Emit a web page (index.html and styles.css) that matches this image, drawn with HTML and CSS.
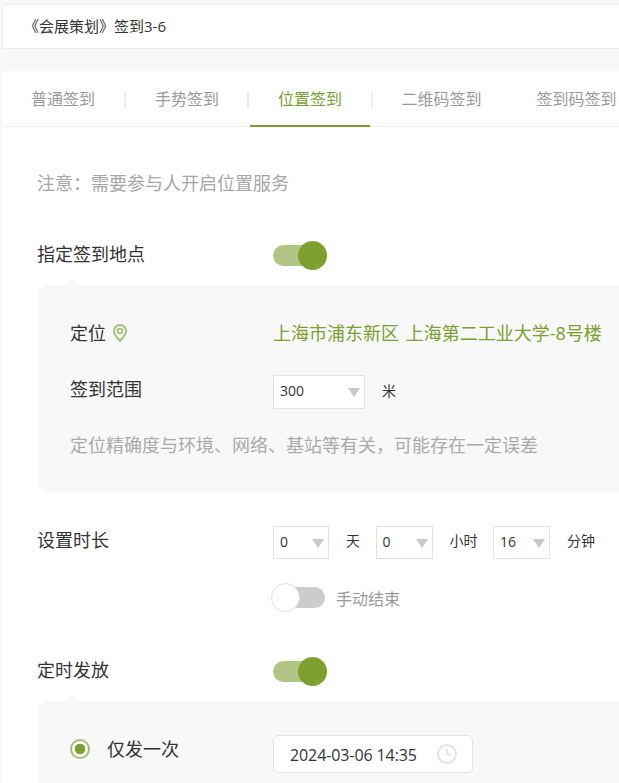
FILE: index.html
```html
<!DOCTYPE html>
<html lang="zh-CN">

<head>
    <meta charset="UTF-8">
    <title>位置签到</title>
    <link rel="stylesheet" href="styles.css">
</head>

<body>
    <div class="page">
        <div class="title_bar">《会展策划》签到3-6</div>

        <div class="main_card">
            <div class="tabs">
                <div class="tab tab_first">普通签到</div>
                <div class="tab">手势签到</div>
                <div class="tab active">位置签到</div>
                <div class="tab no_line">二维码签到</div>
                <div class="tab no_line last">签到码签到</div>
            </div>

            <div class="content">
                <p class="notice">注意&#xFF1A;需要参与人开启位置服务</p>

                <div class="row switch_row">
                    <div class="label">指定签到地点</div>
                    <div class="switch on"><span class="thumb"></span></div>
                </div>

                <div class="panel">
                    <div class="panel_row location_row">
                        <div class="panel_label">定位
                            <svg class="pin" viewBox="0 0 14 18" width="14" height="18">
                                <path d="M7 1C3.700 1 1 3.600 1 6.900c0 4 4 7.600 6 10 2-2.400 6-6 6-10C13 3.600 10.300 1 7 1z" fill="none" stroke="#a3bf70" stroke-width="2"/>
                                <circle cx="7" cy="7" r="2.500" fill="none" stroke="#a3bf70" stroke-width="1.600"/>
                            </svg>
                        </div>
                        <div class="address">上海市浦东新区 上海第二工业大学-8号楼</div>
                    </div>
                    <div class="panel_row range_row">
                        <div class="panel_label">签到范围</div>
                        <div class="select range_select">300<span class="arrow"></span></div>
                        <span class="unit">米</span>
                    </div>
                    <p class="hint">定位精确度与环境、网络、基站等有关&#xFF0C;可能存在一定误差</p>
                </div>

                <div class="row duration_row">
                    <div class="label">设置时长</div>
                    <div class="select small_select first_select">0<span class="arrow"></span></div>
                    <span class="unit">天</span>
                    <div class="select small_select">0<span class="arrow"></span></div>
                    <span class="unit">小时</span>
                    <div class="select small_select">16<span class="arrow"></span></div>
                    <span class="unit">分钟</span>
                </div>

                <div class="manual_row">
                    <div class="switch off"><span class="thumb"></span></div>
                    <span class="manual_text">手动结束</span>
                </div>

                <div class="row switch_row timer_row">
                    <div class="label">定时发放</div>
                    <div class="switch on"><span class="thumb"></span></div>
                </div>

                <div class="panel panel_cut">
                    <div class="once_row">
                        <div class="radio_wrap">
                            <span class="radio"></span>
                            <span class="radio_text">仅发一次</span>
                        </div>
                        <div class="date_input">
                            <span class="date_text">2024-03-06 14:35</span>
                            <svg class="clock" viewBox="0 0 20 20" width="20" height="20">
                                <circle cx="10" cy="10" r="9" fill="none" stroke="#dbe3ef" stroke-width="2"/>
                                <path d="M10 5v5.500h4" fill="none" stroke="#dbe3ef" stroke-width="1.800"/>
                            </svg>
                        </div>
                    </div>
                </div>
            </div>
        </div>
    </div>
</body>

</html>
```

FILE: styles.css
```css
* {
    box-sizing: border-box;
}

html,
body {
    margin: 0;
    height: 100%;
    overflow: hidden;
}

body {
    background-color: #f8f8f8;
    color: #333;
    font-family: "Open Sans", "Noto Sans CJK SC", sans-serif;
}

p {
    margin: 0;
}

.page {
    height: 100%;
    padding: 4px 0 0 2px;
}

.title_bar {
    height: 45px;
    padding-left: 21px;
    background-color: #fff;
    border: 1px solid #ececec;
    border-right: none;
    font-size: 15px;
    line-height: 43px;
}

.main_card {
    height: 712px;
    margin: 22px 0 0 1px;
    background-color: #fff;
}

/* tabs */
.tabs {
    display: flex;
    height: 56px;
    border-bottom: 1px solid #ececec;
}

.tab {
    position: relative;
    flex: none;
    width: 123.500px;
    padding-left: 29.500px;
    font-size: 16px;
    line-height: 56px;
    color: #999;
}

.tab_first {
    width: 122.500px;
    padding-left: 28px;
}

.tab::after {
    content: "";
    position: absolute;
    top: 21px;
    right: 0;
    width: 2px;
    height: 16px;
    background-color: #ececf2;
}

.tab.no_line::after {
    display: none;
}

.tab.active {
    padding-left: 29px;
    color: #7a9e2d;
}

.tab.active::before {
    content: "";
    position: absolute;
    left: 1px;
    right: 3px;
    bottom: -1px;
    height: 2px;
    background-color: #7a9e2d;
}

.tab.no_line {
    width: 164px;
    padding-left: 29px;
}

.tab.last {
    flex: 1;
    width: auto;
    padding-left: 0;
    white-space: nowrap;
}

/* form */
.content {
    padding: 44px 0 0 34px;
}

.notice {
    font-size: 18px;
    line-height: 24px;
    color: #a6a6a6;
}

.row {
    display: flex;
    align-items: center;
}

.switch_row {
    margin-top: 46px;
}

.label {
    width: 236px;
    font-size: 18px;
    line-height: 24px;
    margin-top: -3px;
}

.switch {
    position: relative;
    width: 54px;
    height: 29px;
}

.switch::before {
    content: "";
    position: absolute;
    top: 4px;
    left: 0;
    width: 48px;
    height: 21px;
    border-radius: 11px;
    background-color: #b1c685;
}

.thumb {
    position: absolute;
    top: 0;
    right: 0;
    width: 29px;
    height: 29px;
    border-radius: 50%;
    background-color: #7c9f2e;
}

.switch.off::before {
    left: 2px;
    width: 52px;
    background-color: #ccc;
}

.switch.off .thumb {
    left: 0;
    right: auto;
    background-color: #fff;
    border: 1px solid #ddd;
}

.panel {
    position: relative;
    margin-top: 15px;
    padding: 36px 0 35px 33px;
    background-color: #f8f8f8;
    border-radius: 12px 0 0 12px;
}

.panel_cut {
    padding-bottom: 10px;
    border-radius: 12px 0 0 0;
}

.panel::before {
    content: "";
    position: absolute;
    top: -7px;
    left: 28px;
    border-left: 7px solid transparent;
    border-right: 7px solid transparent;
    border-bottom: 7px solid #f8f8f8;
}

.panel_row {
    display: flex;
    align-items: flex-start;
}

.panel_label {
    display: flex;
    align-items: center;
    gap: 7px;
    width: 203px;
    font-size: 18px;
    line-height: 24px;
}

.address {
    font-size: 18px;
    line-height: 24px;
    word-spacing: 2px;
    white-space: nowrap;
    color: #7c9f2e;
}

.range_row {
    margin-top: 30px;
    align-items: center;
}

.range_row .panel_label {
    margin-top: -6px;
}

.select {
    position: relative;
    flex: none;
    height: 34px;
    padding-left: 6px;
    background-color: #fff;
    border: 1px solid #e2e2e2;
    font-size: 14px;
    line-height: 30px;
}

.range_select {
    width: 92px;
}

.small_select {
    width: 57px;
    height: 33px;
    line-height: 29px;
}

.first_select {
    width: 56px;
}

.arrow {
    position: absolute;
    top: 12px;
    right: 4px;
    border-left: 6px solid transparent;
    border-right: 6px solid transparent;
    border-top: 9px solid #c8c8c8;
}

.unit {
    flex: none;
    margin: -2px 15.500px 0 17px;
    font-size: 14px;
    line-height: 20px;
}

.hint {
    margin-top: 24px;
    font-size: 18px;
    line-height: 24px;
    color: #aaa;
}

.duration_row {
    margin-top: 34px;
    align-items: flex-start;
}

.duration_row .label {
    flex: none;
    margin-top: 2px;
}

.duration_row .unit {
    margin-top: 5px;
}

.manual_row {
    display: flex;
    align-items: center;
    margin: 24px 0 0 234px;
}

.manual_text {
    margin-left: 11px;
    font-size: 16px;
    color: #999;
}

.timer_row {
    margin-top: 45px;
}

.once_row {
    display: flex;
    align-items: center;
    margin-top: -2px;
}

.radio_wrap {
    display: flex;
    align-items: center;
    width: 203px;
    margin-top: -10px;
}

.radio {
    width: 20px;
    height: 20px;
    border: 2px solid #a3bf70;
    border-radius: 50%;
    background: radial-gradient(circle, #7c9f2e 0, #7c9f2e 5px, #fff 5.500px);
}

.radio_text {
    margin-left: 17px;
    font-size: 18px;
    line-height: 24px;
}

.date_input {
    display: flex;
    align-items: center;
    justify-content: space-between;
    width: 200px;
    height: 38px;
    padding: 0 15px 0 16px;
    background-color: #fff;
    border: 1px solid #e2e2e2;
    border-radius: 5px;
    font-size: 16px;
}

.date_text {
    margin-top: 2px;
    letter-spacing: -0.100px;
}
```
